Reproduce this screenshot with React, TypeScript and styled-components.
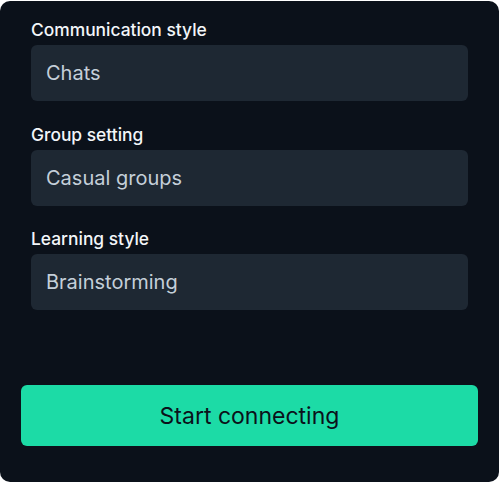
import React from "react";
import styled, { createGlobalStyle } from "styled-components";

const GlobalStyle = createGlobalStyle`
  html, body {
    margin: 0;
    padding: 0;
    background: #ffffff;
  }
  body {
    font-family: Inter, "Noto Sans", "Liberation Sans", sans-serif;
  }
`;

const Card = styled.div`
  box-sizing: border-box;
  width: 499px;
  height: 481px;
  margin-top: 1px;
  background-color: #0b111a;
  border-radius: 10px;
  padding: 19px 21px 36px;
  display: flex;
  flex-direction: column;
`;

const Fields = styled.div`
  display: flex;
  flex-direction: column;
  gap: 23.5px;
  padding: 0 10px;
`;

const Field = styled.div`
  display: flex;
  flex-direction: column;
  gap: 5px;
`;

const Label = styled.label`
  font-size: 17.4px;
  line-height: 20px;
  font-weight: 500;
  color: #f3f6f9;
`;

const Select = styled.div`
  box-sizing: border-box;
  height: 56px;
  border-radius: 6px;
  background-color: #1e2833;
  padding: 0 15px;
  display: flex;
  align-items: center;
  font-size: 20px;
  color: #c4cfd9;
`;

const StartButton = styled.button`
  margin-top: auto;
  height: 61px;
  border: none;
  border-radius: 6px;
  background-color: #1cdba6;
  color: #0b111a;
  font-family: inherit;
  font-size: 23px;
  font-weight: 400;
  cursor: pointer;
`;

const options = [
  { label: "Communication style", value: "Chats" },
  { label: "Group setting", value: "Casual groups" },
  { label: "Learning style", value: "Brainstorming" },
];

export default function App() {
  return (
    <>
      <GlobalStyle />
      <Card>
        <Fields>
          {options.map((o) => (
            <Field key={o.label}>
              <Label>{o.label}</Label>
              <Select>{o.value}</Select>
            </Field>
          ))}
        </Fields>
        <StartButton type="button">Start connecting</StartButton>
      </Card>
    </>
  );
}
